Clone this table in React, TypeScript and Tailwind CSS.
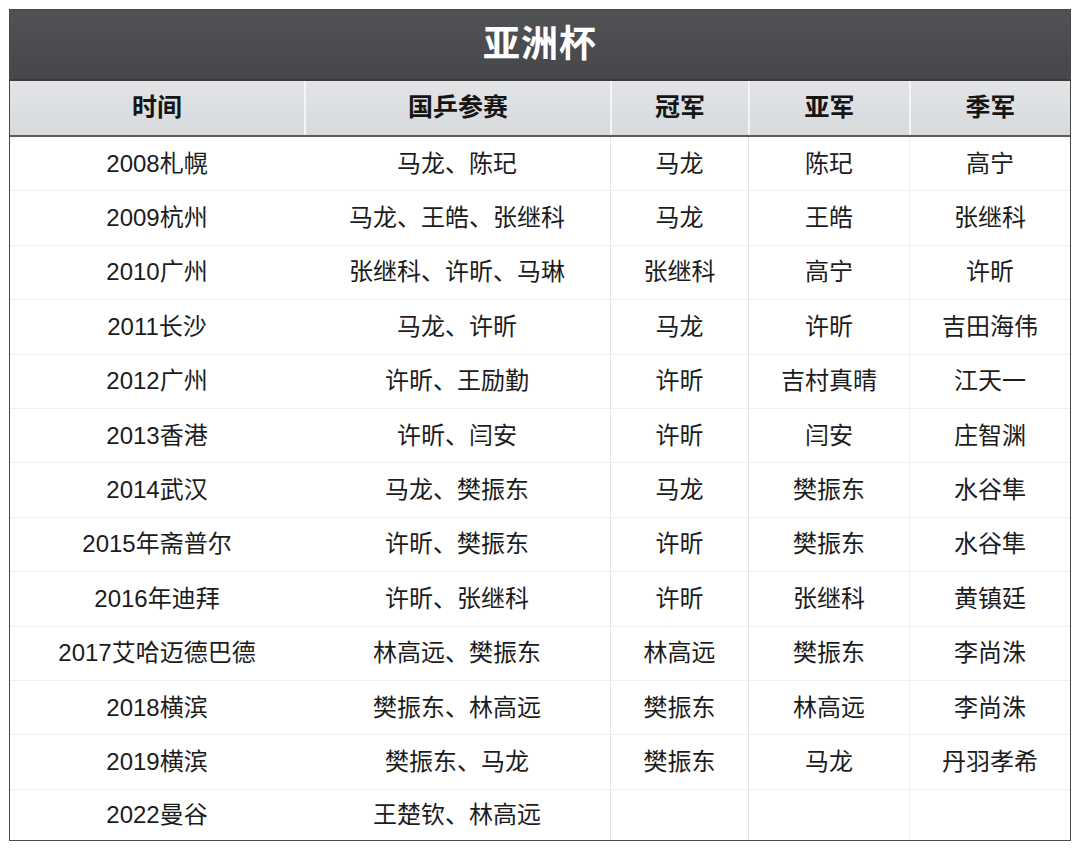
const rows: string[][] = [
  ['2008札幌', '马龙、陈玘', '马龙', '陈玘', '高宁'],
  ['2009杭州', '马龙、王皓、张继科', '马龙', '王皓', '张继科'],
  ['2010广州', '张继科、许昕、马琳', '张继科', '高宁', '许昕'],
  ['2011长沙', '马龙、许昕', '马龙', '许昕', '吉田海伟'],
  ['2012广州', '许昕、王励勤', '许昕', '吉村真晴', '江天一'],
  ['2013香港', '许昕、闫安', '许昕', '闫安', '庄智渊'],
  ['2014武汉', '马龙、樊振东', '马龙', '樊振东', '水谷隼'],
  ['2015年斋普尔', '许昕、樊振东', '许昕', '樊振东', '水谷隼'],
  ['2016年迪拜', '许昕、张继科', '许昕', '张继科', '黄镇廷'],
  ['2017艾哈迈德巴德', '林高远、樊振东', '林高远', '樊振东', '李尚洙'],
  ['2018横滨', '樊振东、林高远', '樊振东', '林高远', '李尚洙'],
  ['2019横滨', '樊振东、马龙', '樊振东', '马龙', '丹羽孝希'],
  ['2022曼谷', '王楚钦、林高远', '', '', ''],
];

const headers = ['时间', '国乒参赛', '冠军', '亚军', '季军'];

const cols = 'grid grid-cols-[294px_306px_138px_161px_161px]';

// body column dividers: only the middle ones show in the picture
const bodyBorder = ['', '', 'border-l border-[#e3e3e5]', 'border-l border-[#e3e3e5]', 'border-l border-[#f0f0f2]'];

export default function App() {
  return (
    <div
      className="w-[1080px] h-[852px] bg-white pt-[9px] pl-[9px]"
      style={{ fontFamily: '"Liberation Sans", "Noto Sans CJK SC", sans-serif' }}
    >
      <div className="w-[1062px] border border-[#4a4a4a] bg-white">
        {/* title */}
        <div className="h-[71px] flex items-center justify-center bg-gradient-to-b from-[#505256] to-[#46474a] border-b-2 border-[#3a3a3a]">
          <span className="text-white text-[37px] font-bold tracking-[1px]">亚洲杯</span>
        </div>

        {/* header */}
        <div className={`${cols} h-[56px] bg-gradient-to-b from-[#e2e4e6] to-[#d7dadd] border-b-2 border-[#5a5a5a]`}>
          {headers.map((h, i) => (
            <div
              key={h}
              className={`flex items-center justify-center text-[25px] font-bold text-[#151515] ${i > 0 ? 'border-l-2 border-[#f4f5f6]' : ''}`}
            >
              {h}
            </div>
          ))}
        </div>

        {/* body */}
        {rows.map((r, ri) => {
          const last = ri === rows.length - 1;
          return (
            <div
              key={r[0]}
              className={`${cols} ${last ? 'h-[50px]' : 'h-[54.4px] border-b border-[#efeff1]'}`}
            >
              {r.map((c, ci) => (
                <div
                  key={ci}
                  className={`flex items-center justify-center text-[24px] text-[#1c1c1c] ${bodyBorder[ci]}`}
                >
                  {c}
                </div>
              ))}
            </div>
          );
        })}
      </div>
    </div>
  );
}
